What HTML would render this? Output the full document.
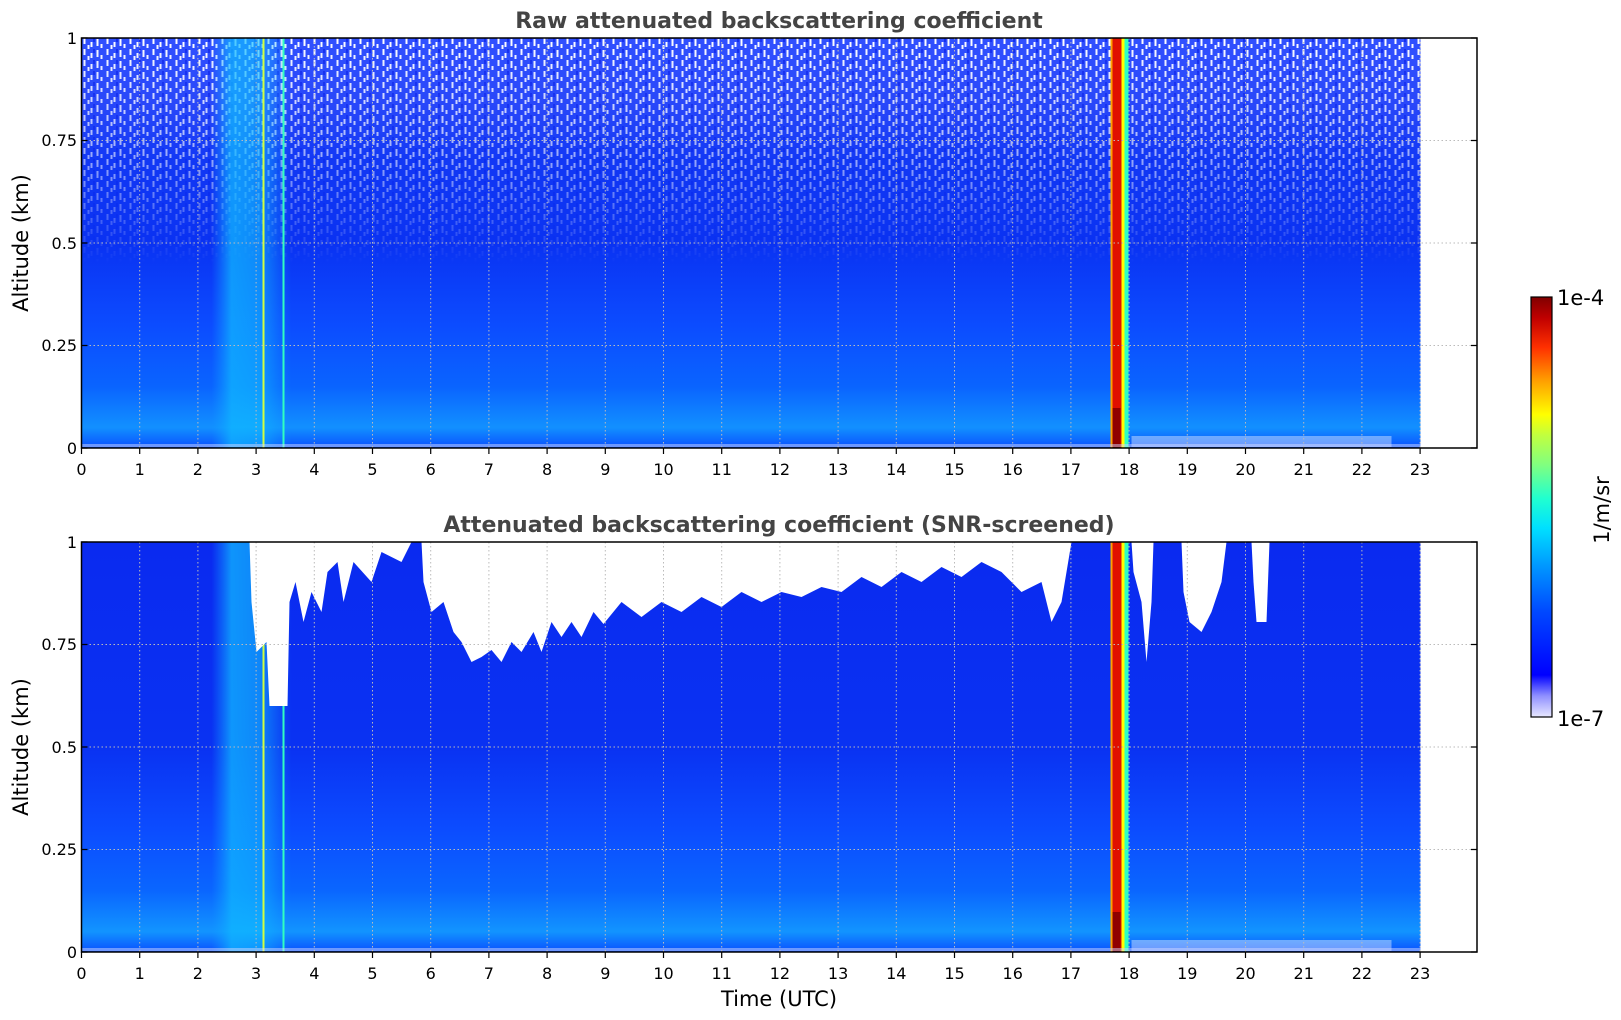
<!DOCTYPE html>
<html><head><meta charset="utf-8"><style>
html,body{margin:0;padding:0;background:#fff;}
svg{display:block;font-family:"DejaVu Sans","Liberation Sans",sans-serif;}
</style></head><body>
<svg width="1621" height="1020" viewBox="0 0 1621 1020" xmlns="http://www.w3.org/2000/svg">
<defs>
<linearGradient id="gu" x1="0" y1="0" x2="0" y2="1">
<stop offset="0" stop-color="#3050ff"/><stop offset="0.15" stop-color="#2a48fa"/>
<stop offset="0.3" stop-color="#1238f5"/><stop offset="0.5" stop-color="#0a32f2"/>
<stop offset="0.7" stop-color="#0c4cff"/><stop offset="0.85" stop-color="#0a64ff"/>
<stop offset="0.95" stop-color="#1290ff"/><stop offset="1" stop-color="#0a50ff"/>
</linearGradient>
<linearGradient id="gl" x1="0" y1="0" x2="0" y2="1">
<stop offset="0" stop-color="#0a2af0"/><stop offset="0.5" stop-color="#0a32f2"/>
<stop offset="0.7" stop-color="#0c4cff"/><stop offset="0.85" stop-color="#0a66ff"/>
<stop offset="0.95" stop-color="#1294ff"/><stop offset="1" stop-color="#0a50ff"/>
</linearGradient>
<linearGradient id="cy" x1="0" y1="0" x2="1" y2="0">
<stop offset="0" stop-color="#10a0ff" stop-opacity="0"/><stop offset="0.25" stop-color="#10b8ff" stop-opacity="0.75"/>
<stop offset="0.6" stop-color="#10c0ff" stop-opacity="0.6"/><stop offset="1" stop-color="#10a0ff" stop-opacity="0"/>
</linearGradient>
<linearGradient id="jet" x1="0" y1="1" x2="0" y2="0">
<stop offset="0" stop-color="#e8e8ff"/><stop offset="0.05" stop-color="#9090ff"/>
<stop offset="0.1" stop-color="#0000ff"/><stop offset="0.25" stop-color="#0048ff"/>
<stop offset="0.35" stop-color="#0090ff"/><stop offset="0.45" stop-color="#00e0ff"/>
<stop offset="0.52" stop-color="#20ffd0"/><stop offset="0.6" stop-color="#80ff80"/>
<stop offset="0.67" stop-color="#c0ff40"/><stop offset="0.72" stop-color="#ffff00"/>
<stop offset="0.8" stop-color="#ffa000"/><stop offset="0.88" stop-color="#ff3000"/>
<stop offset="0.95" stop-color="#c00000"/><stop offset="1" stop-color="#800000"/>
</linearGradient>
<pattern id="noise" width="23" height="11" patternUnits="userSpaceOnUse">
<rect x="2" y="0" width="2" height="6" fill="#fff"/><rect x="9" y="4" width="2" height="5" fill="#fff"/>
<rect x="15" y="1" width="2" height="7" fill="#fff"/><rect x="19" y="6" width="2" height="4" fill="#fff"/>
<rect x="6" y="7" width="2" height="4" fill="#fff"/><rect x="12" y="0" width="1" height="4" fill="#0010e0"/>
</pattern>
<linearGradient id="nf" x1="0" y1="0" x2="0" y2="1">
<stop offset="0" stop-color="#fff" stop-opacity="1"/><stop offset="0.3" stop-color="#fff" stop-opacity="0.55"/>
<stop offset="0.55" stop-color="#fff" stop-opacity="0"/></linearGradient>
<mask id="nm"><rect x="0" y="0" width="1339" height="410" fill="url(#nf)"/></mask>
</defs>

<text x="779" y="28" text-anchor="middle" font-size="22" font-weight="bold" fill="#444">Raw attenuated backscattering coefficient</text>
<text x="779" y="532" text-anchor="middle" font-size="22" font-weight="bold" fill="#444">Attenuated backscattering coefficient (SNR-screened)</text>

<g transform="translate(81.5,38)">
<rect x="0" y="0" width="1339" height="410" fill="url(#gu)"/>
<rect x="0" y="0" width="1339" height="410" fill="url(#noise)" mask="url(#nm)"/>
<rect x="130" y="0" width="80" height="410" fill="url(#cy)"/>
<rect x="181" y="0" width="2" height="410" fill="#d0ff40"/>
<rect x="201" y="0" width="2" height="410" fill="#30ffc0"/>
<rect x="1030" y="0" width="10" height="410" fill="#e01000"/>
<rect x="1029" y="0" width="2" height="410" fill="#ffa000"/>
<rect x="1040" y="0" width="3" height="410" fill="#ffff00"/>
<rect x="1043" y="0" width="4" height="410" fill="#30ffc0"/>
<rect x="1031" y="370" width="8" height="40" fill="#900000"/>
<rect x="1050" y="398" width="260" height="11" fill="#fff" opacity="0.4"/>
<rect x="0" y="406" width="1339" height="3" fill="#d0d8ff" opacity="0.5"/>
</g>
<g transform="translate(81.5,542)">
<rect x="0" y="0" width="1339" height="410" fill="url(#gl)"/>
<rect x="130" y="0" width="80" height="410" fill="url(#cy)"/>
<rect x="181" y="0" width="2" height="410" fill="#d0ff40"/>
<rect x="201" y="0" width="2" height="410" fill="#30ffc0"/>
<path fill="#fff" d="M168,0 L170,60 L175,110 L185,100 L188,164 L206,164 L208,60 L214,40 L222,80 L230,50 L240,70 L246,30 L256,20 L262,60 L272,20 L290,40 L300,10 L320,20 L330,0 Z"/>
<path fill="#fff" d="M340,0 L342,40 L350,70 L362,60 L372,90 L380,100 L390,120 L400,115 L410,108 L420,120 L430,100 L440,110 L452,90 L460,110 L470,80 L480,95 L490,80 L500,95 L512,70 L522,82 L540,60 L560,75 L580,60 L600,70 L620,55 L640,65 L660,50 L680,60 L700,50 L720,55 L740,45 L760,50 L780,35 L800,45 L820,30 L840,40 L860,25 L880,35 L900,20 L920,30 L940,50 L960,40 L970,80 L980,60 L990,0 Z"/>
<path fill="#fff" d="M1050,0 L1052,30 L1060,60 L1065,120 L1070,60 L1072,0 Z"/>
<path fill="#fff" d="M1100,0 L1102,50 L1108,80 L1120,90 L1130,70 L1140,40 L1145,0 Z"/>
<path fill="#fff" d="M1170,0 L1172,40 L1175,80 L1185,80 L1188,0 Z"/>
<rect x="1030" y="0" width="10" height="410" fill="#e01000"/>
<rect x="1029" y="0" width="2" height="410" fill="#ffa000"/>
<rect x="1040" y="0" width="3" height="410" fill="#ffff00"/>
<rect x="1043" y="0" width="4" height="410" fill="#30ffc0"/>
<rect x="1031" y="370" width="8" height="40" fill="#900000"/>
<rect x="1050" y="398" width="260" height="11" fill="#fff" opacity="0.4"/>
<rect x="0" y="406" width="1339" height="3" fill="#d0d8ff" opacity="0.5"/>
</g>

<g stroke="#bbb" stroke-width="1" stroke-dasharray="1.5,2.5">
<path d="M81.5,140.5H1477M81.5,243H1477M81.5,345.5H1477"/>
<path d="M81.5,644.5H1477M81.5,747H1477M81.5,849.5H1477"/>
<path d="M139.7,38V448M197.9,38V448M256.1,38V448M314.3,38V448M372.5,38V448M430.7,38V448M488.9,38V448M547.1,38V448M605.3,38V448M663.5,38V448M721.7,38V448M779.9,38V448M838.1,38V448M896.3,38V448M954.5,38V448M1012.7,38V448M1070.9,38V448M1129.1,38V448M1187.3,38V448M1245.5,38V448M1303.7,38V448M1361.9,38V448M1420.1,38V448"/>
<path d="M139.7,542V952M197.9,542V952M256.1,542V952M314.3,542V952M372.5,542V952M430.7,542V952M488.9,542V952M547.1,542V952M605.3,542V952M663.5,542V952M721.7,542V952M779.9,542V952M838.1,542V952M896.3,542V952M954.5,542V952M1012.7,542V952M1070.9,542V952M1129.1,542V952M1187.3,542V952M1245.5,542V952M1303.7,542V952M1361.9,542V952M1420.1,542V952"/>
</g>
<rect x="81.5" y="38" width="1395.5" height="410" fill="none" stroke="#000" stroke-width="1.5"/>
<rect x="81.5" y="542" width="1395.5" height="410" fill="none" stroke="#000" stroke-width="1.5"/>
<g stroke="#000" stroke-width="1.2">
<path d="M81.5,448v6M139.7,448v6M197.9,448v6M256.1,448v6M314.3,448v6M372.5,448v6M430.7,448v6M488.9,448v6M547.1,448v6M605.3,448v6M663.5,448v6M721.7,448v6M779.9,448v6M838.1,448v6M896.3,448v6M954.5,448v6M1012.7,448v6M1070.9,448v6M1129.1,448v6M1187.3,448v6M1245.5,448v6M1303.7,448v6M1361.9,448v6M1420.1,448v6"/>
<path d="M81.5,952v6M139.7,952v6M197.9,952v6M256.1,952v6M314.3,952v6M372.5,952v6M430.7,952v6M488.9,952v6M547.1,952v6M605.3,952v6M663.5,952v6M721.7,952v6M779.9,952v6M838.1,952v6M896.3,952v6M954.5,952v6M1012.7,952v6M1070.9,952v6M1129.1,952v6M1187.3,952v6M1245.5,952v6M1303.7,952v6M1361.9,952v6M1420.1,952v6"/>
<path d="M81.5,38h6M81.5,140.5h6M81.5,243h6M81.5,345.5h6M81.5,448h6M1477,38h-6M1477,140.5h-6M1477,243h-6M1477,345.5h-6M1477,448h-6"/>
<path d="M81.5,542h6M81.5,644.5h6M81.5,747h6M81.5,849.5h6M81.5,952h6M1477,542h-6M1477,644.5h-6M1477,747h-6M1477,849.5h-6M1477,952h-6"/>
</g>
<g font-size="16" fill="#000" text-anchor="middle">
<text x="81.5" y="475">0</text><text x="139.7" y="475">1</text><text x="197.9" y="475">2</text><text x="256.1" y="475">3</text><text x="314.3" y="475">4</text><text x="372.5" y="475">5</text><text x="430.7" y="475">6</text><text x="488.9" y="475">7</text><text x="547.1" y="475">8</text><text x="605.3" y="475">9</text><text x="663.5" y="475">10</text><text x="721.7" y="475">11</text><text x="779.9" y="475">12</text><text x="838.1" y="475">13</text><text x="896.3" y="475">14</text><text x="954.5" y="475">15</text><text x="1012.7" y="475">16</text><text x="1070.9" y="475">17</text><text x="1129.1" y="475">18</text><text x="1187.3" y="475">19</text><text x="1245.5" y="475">20</text><text x="1303.7" y="475">21</text><text x="1361.9" y="475">22</text><text x="1420.1" y="475">23</text>
<text x="81.5" y="979">0</text><text x="139.7" y="979">1</text><text x="197.9" y="979">2</text><text x="256.1" y="979">3</text><text x="314.3" y="979">4</text><text x="372.5" y="979">5</text><text x="430.7" y="979">6</text><text x="488.9" y="979">7</text><text x="547.1" y="979">8</text><text x="605.3" y="979">9</text><text x="663.5" y="979">10</text><text x="721.7" y="979">11</text><text x="779.9" y="979">12</text><text x="838.1" y="979">13</text><text x="896.3" y="979">14</text><text x="954.5" y="979">15</text><text x="1012.7" y="979">16</text><text x="1070.9" y="979">17</text><text x="1129.1" y="979">18</text><text x="1187.3" y="979">19</text><text x="1245.5" y="979">20</text><text x="1303.7" y="979">21</text><text x="1361.9" y="979">22</text><text x="1420.1" y="979">23</text>
</g>
<g font-size="16" fill="#000" text-anchor="end">
<text x="77" y="44">1</text><text x="77" y="146">0.75</text><text x="77" y="249">0.5</text><text x="77" y="351">0.25</text><text x="77" y="454">0</text>
<text x="77" y="548">1</text><text x="77" y="650">0.75</text><text x="77" y="753">0.5</text><text x="77" y="855">0.25</text><text x="77" y="958">0</text>
</g>
<text transform="translate(28,243) rotate(-90)" text-anchor="middle" font-size="21" fill="#000">Altitude (km)</text>
<text transform="translate(28,747) rotate(-90)" text-anchor="middle" font-size="21" fill="#000">Altitude (km)</text>
<text x="779" y="1006" text-anchor="middle" font-size="21" fill="#000">Time (UTC)</text>

<rect x="1531" y="297" width="21" height="420" fill="url(#jet)" stroke="#000" stroke-width="1.2"/>
<text x="1557" y="305" font-size="21" fill="#000">1e-4</text>
<text x="1557" y="726" font-size="21" fill="#000">1e-7</text>
<text transform="translate(1609,510) rotate(-90)" text-anchor="middle" font-size="21" fill="#000">1/m/sr</text>
</svg>
</body></html>
